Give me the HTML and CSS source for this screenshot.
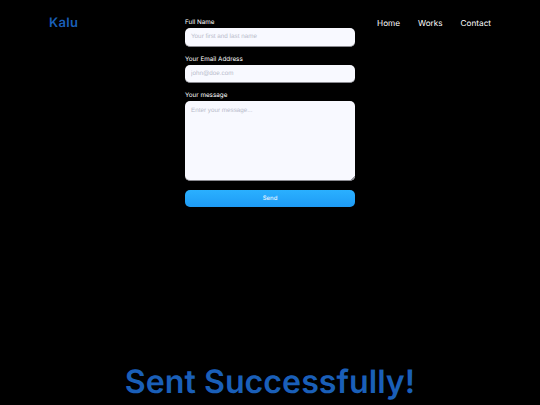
FILE: index.html
```html
<!DOCTYPE html>
<html lang="en">
<head>
    <meta charset="UTF-8">
    <meta name="viewport" content="width=device-width, initial-scale=1.0">
    <title>Kalu</title>
    <link rel="stylesheet" href="styles.css">
</head>
<body>

<div class="page">
    <div class="top">
        <a href="#" class="logo">Kalu</a>

        <form class="contact-form">
            <label for="fullName">Full Name</label>
            <input type="text" id="fullName" placeholder="Your first and last name">

            <label for="email">Your Email Address</label>
            <input type="email" id="email" placeholder="john@doe.com">

            <label for="message">Your message</label>
            <textarea id="message" placeholder="Enter your message..."></textarea>

            <button type="button" class="send-button">Send</button>
        </form>

        <nav class="nav">
            <a href="#">Home</a>
            <a href="#">Works</a>
            <a href="#">Contact</a>
        </nav>
    </div>

    <h1 class="sent">Sent Successfully!</h1>
</div>

</body>
</html>
```

FILE: styles.css
```css
* {
    box-sizing: border-box;
}

body {
    margin: 0;
    background-color: #000;
    font-family: "Inter", "Open Sans", sans-serif;
    color: #fff;
    text-rendering: geometricPrecision;
}

.page {
    height: 405px;
    overflow: hidden;
    display: flex;
    flex-direction: column;
    justify-content: space-between;
}

.top {
    display: grid;
    grid-template-columns: 1fr 170px 1fr;
    padding: 0 49px;
}

.logo {
    margin-top: 15px;
    color: #1a5fb8;
    font-size: 13px;
    line-height: 16px;
    font-weight: 600;
    letter-spacing: 0.3px;
    text-decoration: none;
}

.nav {
    display: flex;
    justify-content: flex-end;
    gap: 18px;
    padding-top: 17px;
}

.nav a {
    color: #fff;
    font-size: 8.2px;
    font-weight: 400;
    line-height: 12px;
    text-decoration: none;
}

.contact-form {
    display: flex;
    flex-direction: column;
    padding-top: 17px;
}

label {
    height: 11px;
    font-size: 6.3px;
    font-weight: 400;
    line-height: 10px;
}

input,
textarea {
    width: 100%;
    padding: 0 6px;
    border: none;
    border-bottom: 1px solid #8a8a90;
    border-radius: 5px;
    background-color: #f8f9ff;
    font-family: "Liberation Sans", sans-serif;
    font-size: 6.3px;
    color: #333;
    text-rendering: geometricPrecision;
}

input {
    height: 18.5px;
    margin-bottom: 7px;
}

textarea {
    height: 80px;
    padding-top: 6px;
    margin-bottom: 9px;
    resize: none;
    background-image: linear-gradient(135deg, transparent 50%, #9a9aa0 50%);
    background-size: 4px 4px;
    background-position: right bottom;
    background-repeat: no-repeat;
}

input::placeholder,
textarea::placeholder {
    color: #b9bccb;
}

.send-button {
    height: 17px;
    border: none;
    border-radius: 5px;
    background: linear-gradient(#2ab0ff, #1e9bf5);
    color: #e8f4ff;
    font-family: "Inter", sans-serif;
    font-size: 6px;
    font-weight: 500;
    text-rendering: geometricPrecision;
}

.sent {
    margin: 0 0 3px;
    text-align: center;
    color: #1a5fb8;
    font-size: 32.2px;
    line-height: 40px;
    font-weight: 600;
}
```
